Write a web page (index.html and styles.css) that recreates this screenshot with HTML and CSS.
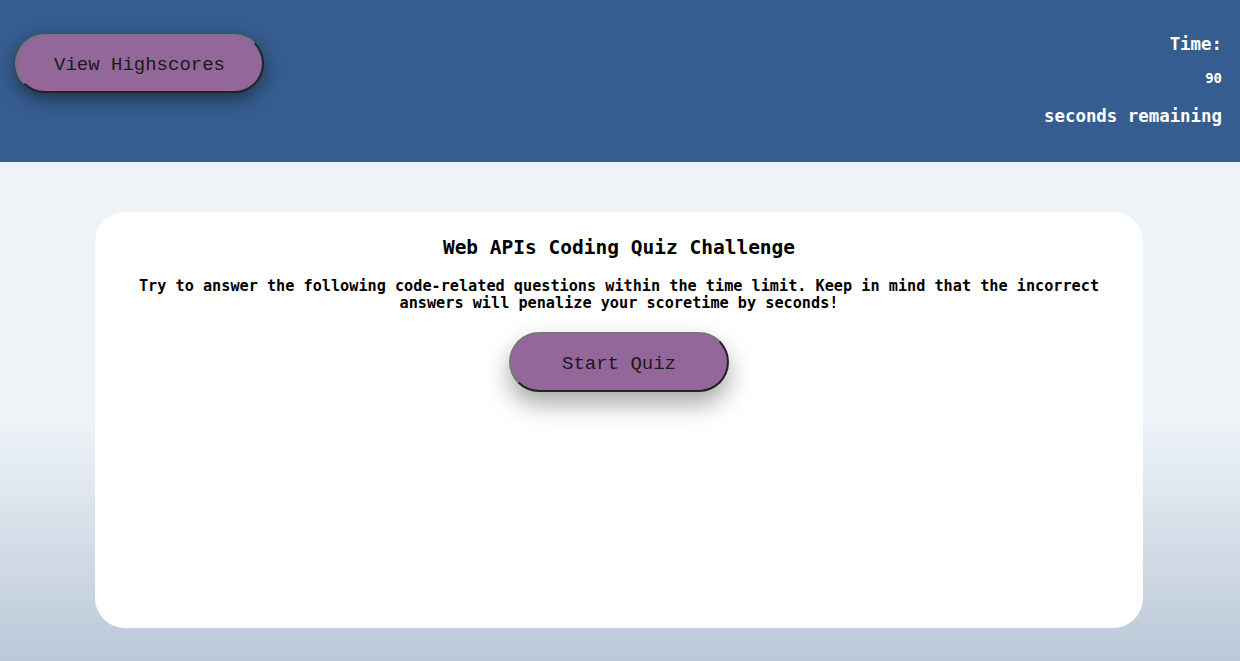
FILE: index.html
```html
<!DOCTYPE html>
<html>
<head>
<meta charset="utf-8">
<title>Web APIs Coding Quiz</title>
<link rel="stylesheet" href="styles.css">
</head>
<body>
<header class="topbar">
  <button class="btn btn-scores">View Highscores</button>
  <div class="timer">
    <div class="timer-label">Time:</div>
    <div class="timer-value">90</div>
    <div class="timer-label timer-suffix">seconds remaining</div>
  </div>
</header>
<main class="stage">
  <section class="card">
    <h1 class="card-title">Web APIs Coding Quiz Challenge</h1>
    <p class="card-text">Try to answer the following code-related questions within the time limit. Keep in mind that the incorrect answers will penalize your scoretime by seconds!</p>
    <button class="btn btn-start">Start Quiz</button>
  </section>
</main>
</body>
</html>
```
FILE: styles.css
```css
* { box-sizing: border-box; }
html, body { height: 100%; }
body {
  margin: 0;
  font-family: "DejaVu Sans Mono", monospace;
  background: linear-gradient(180deg, #eef3f8 0px, #eef3f8 420px, #bac8d8 661px);
  min-height: 661px;
}
.topbar {
  height: 162px;
  background: #365d8f;
  display: flex;
  justify-content: space-between;
  align-items: flex-start;
  padding: 34px 18px 0 15px;
}
.btn {
  font-family: "Liberation Mono", "Courier New", monospace;
  font-size: 19px;
  color: #1a1a1a;
  background: #94679a;
  border: 2px solid;
  border-color: #777 #222 #222 #777;
  border-radius: 30px;
  box-shadow: 0 6px 18px rgba(0, 0, 0, 0.45);
  cursor: pointer;
}
.btn-scores {
  width: 249px;
  height: 59px;
  padding: 3px 0 0;
}
.timer {
  display: flex;
  flex-direction: column;
  align-items: flex-end;
  color: #fff;
  font-weight: bold;
  padding-top: 0;
}
.timer-label {
  font-size: 17.4px;
  line-height: 20px;
}
.timer-value {
  font-size: 14px;
  line-height: 16px;
  margin-top: 16px;
}
.timer-suffix {
  margin-top: 20px;
}
.stage {
  padding: 50px 97px 0 95px;
}
.card {
  background: #fff;
  border-radius: 30px;
  height: 416px;
  display: flex;
  flex-direction: column;
  align-items: center;
  padding: 25px 30px 0;
}
.card-title {
  font-size: 19.5px;
  line-height: 22px;
  margin: 0 0 19px;
  color: #000;
}
.card-text {
  font-size: 15.2px;
  font-weight: bold;
  line-height: 17px;
  text-align: center;
  margin: 0 0 20px;
  color: #000;
}
.btn-start {
  width: 220px;
  height: 60px;
  padding: 3px 0 0;
  box-shadow: 0 12px 24px rgba(0, 0, 0, 0.35);
}
```
